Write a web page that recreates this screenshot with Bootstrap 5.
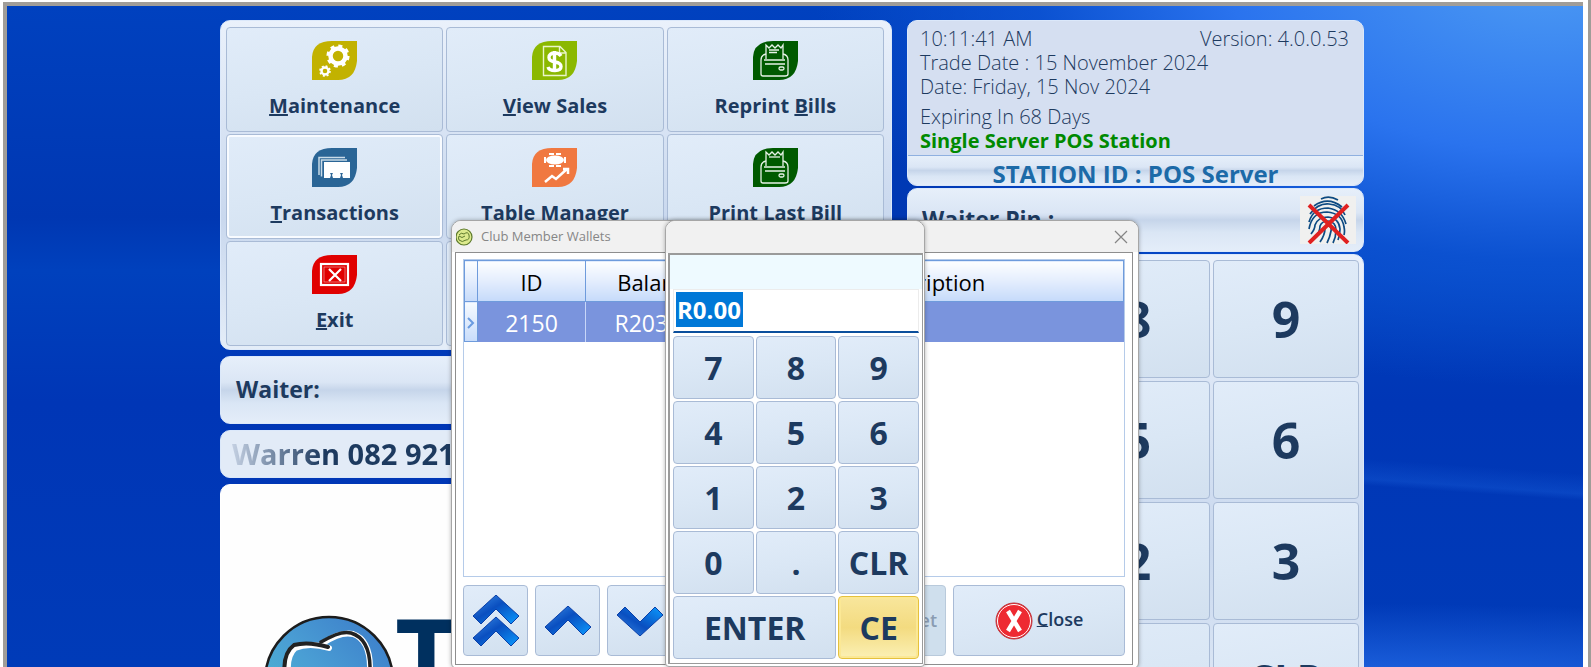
<!DOCTYPE html>
<html lang="en">
<head>
<meta charset="utf-8">
<meta name="viewport" content="width=device-width, initial-scale=1">
<title>POS Server</title>
<link href="https://cdn.jsdelivr.net/npm/bootstrap@5.3.0/dist/css/bootstrap.min.css" rel="stylesheet">
<style>
:root{--ink:#1d3a5f;--edge:#a9bbd6}
body{font-family:"Open Sans","Noto Sans",sans-serif;color:var(--ink);background:#fff;line-height:1.2}
.screen{height:100vh;padding-top:2px;border-right:3px solid #a09d98;background:#fff}
.desk{height:100%;margin-left:3px;margin-right:5px;padding-right:6px;border-top:4px solid #a09d98;border-left:4px solid #a09d98;
 background:
 linear-gradient(184deg,transparent 69%,rgba(40,120,240,.22) 72%,transparent 73%) right 0 top 0/240px 100% no-repeat,
 radial-gradient(ellipse 740px 420px at 98% -6%,#4e9cf4 0,#2a73ee 44%,rgba(14,86,214,.8) 70%,rgba(0,60,190,0) 100%),
 radial-gradient(ellipse 900px 90px at 84% 104%,rgba(40,112,236,.9),rgba(0,60,190,0)),
 linear-gradient(#0041bf 0,#0037b2 32%,#0041bd 40%,#0036b6 60%,#003bb8 100%)}
.station{width:1144px;max-width:100%;padding-top:14px}
.side-menu{width:672px;gap:6px}
.side-pin{width:457px;gap:2px}
.pane{border-radius:10px;background:linear-gradient(#eaf1fb,#c9d8ee 60%,#e4edf8);border:1px solid #dbe8fa}
.gloss{background:linear-gradient(#e6effa,#dbe6f5 38%,#c6d5ea 50%,#dae6f5 70%,#e4edf9)}
.key{--bs-btn-border-radius:4px;--bs-btn-padding-x:0;--bs-btn-padding-y:0;--bs-btn-color:var(--ink);--bs-btn-border-color:var(--edge);--bs-btn-disabled-color:#8a9cb2;--bs-btn-disabled-border-color:#b9cadb;--bs-btn-disabled-opacity:1;
 background:linear-gradient(170deg,#e1ecf9,#dae7f5 50%,#d2e0ef);font-weight:700;line-height:1.2;min-width:0}
.key:disabled{background:#cfdfed}
.menu-grid{display:grid;grid-template-columns:repeat(3,1fr);grid-auto-rows:105px;column-gap:3px;row-gap:2px;padding:6px 7px 3px 5px}
.menu-grid .key{font-size:20px}
.menu-grid svg{display:block;margin:0 auto 14px}
.lit{box-shadow:inset 0 0 0 2px #f8fbff}
.pad-grid{display:grid;grid-template-columns:repeat(3,1fr);grid-auto-rows:118px;gap:3px;padding:5px 4px 5px 7px}
.pad-grid .key{font-size:50px}
.pad-grid .zero{grid-column:span 2}
.pad-grid .word-key{font-size:40px;padding-bottom:8px}
.info{background:#d5dff1;font-size:20px;font-weight:300}
.info-text{padding:6px 14px 2px 12px}
.info p{line-height:24px;margin:0}
.expiry{padding-top:6px}
.server{color:#008a00}
.strip{height:30px;font-size:24px;font-weight:700;line-height:36px;color:#1c6aa8;border-top:1px solid #8fb0e0;border-radius:0 0 10px 10px}
.pin-row{height:64px;font-size:23px;font-weight:700;padding:0 7px 0 14px}
.waiter-row{height:68px;font-size:23px;font-weight:700;padding-left:15px}
.ticker{height:48px;font-size:29px;font-weight:700;background:#e2ebf7;padding-left:11px}
.ticker span{background:linear-gradient(90deg,#c4d0e2 0,var(--ink) 90px);-webkit-background-clip:text;background-clip:text;color:transparent}
.logo-pane{height:220px;background:#fefefe;border-color:#fff}
.logo-word{font-size:108px;line-height:1;font-weight:700;color:#00305f;padding-top:116px}
.float-win{position:absolute;left:0;right:0;top:214px;margin:0 auto;background:#fff;border:1px solid #a6a6a6;border-radius:10px 10px 6px 6px;box-shadow:0 0 4px rgba(0,0,0,.3);overflow:hidden}
.win-title{height:31px;background:#f1f1f1;font-size:13px;color:#868686}
.wallets{width:688px}
.wallets .client{margin:0 5px 3px 3px;border:1px solid #8e8e8e;padding:6px 7px 8px 7px}
.grid-box{height:318px;border:1px solid #b5cbe9;background:#fff}
.grid-box table{table-layout:fixed;width:100%;font-size:23px;text-align:center}
.grid-box th,.grid-box td{font-weight:400;height:40px;padding:2px 0 0;line-height:28px}
.grid-box thead th{color:#000;font-size:22px;background:linear-gradient(#fdfeff,#e3edfd 50%,#c5dafa);height:41px}
.grid-box th{border:1px solid #6e9bdc}
.grid-box td{color:#fff;background:#7a94dd;border-right:1px solid #c8d6f8}
.grid-box td:last-child{border-right:0}
.grid-box tbody th{background:linear-gradient(#f6faff,#c8dcfa)}
.col-mark{width:13px}.col-id{width:108px}.col-bal{width:144px}
.tool-row{gap:7px;margin-top:8px}
.tool-row .key{height:71px;width:65px;flex:none}
.tool-row .btn-wide{width:172px;font-size:18px;font-weight:600}
.numpad{width:260px;border-radius:10px 10px 4px 4px}
.numpad .win-title{height:32px}
.numpad .client{margin:0 1px 2px 2px;border:2px solid #9a9a9a;border-width:2px 1px 1px 2px;padding:0 3px 4px 3px;background:linear-gradient(#eefaff 0 34px,#fff 34px)}
.amount{height:44px;border:1px solid #ececec;border-bottom:2px solid #0b4f9c;padding:2px;background:#fff}
.amount-area{padding-top:34px}
.amount input{font-size:24px;font-weight:700;color:#fff;background:#0078d7;border:0;padding:0 0 0 1px;width:67px;height:35px;outline:0;display:block}
.num-grid{display:grid;grid-template-columns:repeat(3,1fr);grid-auto-rows:63px;gap:2px;margin-top:3px}
.num-grid .key{font-size:32px;padding-top:2px}
.num-grid .enter{grid-column:span 2}
.num-grid .hot{background:linear-gradient(#f8e69c,#f3db80 50%,#fbf0b4);border-color:#e5c13c;box-shadow:inset 0 0 0 2px #fbe895}
</style>
</head>
<body>
<svg width="0" height="0" class="position-absolute" aria-hidden="true">
 <defs>
  <path id="leaf" d="M0 39V16Q1 0 20 0H45V20Q43 39 26 39Z"/>
  <linearGradient id="blu" x1="0" y1="0" x2="1" y2="1"><stop offset="0" stop-color="#3c8fe8"/><stop offset=".45" stop-color="#0a4fc0"/><stop offset="1" stop-color="#0a9bff"/></linearGradient>
  <linearGradient id="ball" x1="0" y1="1" x2="1" y2="0"><stop offset="0" stop-color="#4cc0cf"/><stop offset=".5" stop-color="#4a9ed4"/><stop offset="1" stop-color="#3a78c8"/></linearGradient>
  <g id="printer" fill="none" stroke="#e6f2e6" stroke-width="1.300"><path d="M13 18V4l3 3 3-3 3 3 3-3 3 3 2-3v14"/><path d="M13 13q-5 1-5 6v14q0 2 2 2h22q3 0 3-2V19q0-5-5-6M11 19h21M12 23h20"/><rect x="26" y="26" width="5" height="3" rx="1.500"/></g>
  <path id="up" d="M0 21 23 0 46 21 38 29 23 14 8 29Z" fill="url(#blu)" stroke="#0a3fa8" stroke-width="1"/>
 </defs>
</svg>
<div class="screen">
<main class="desk position-relative overflow-hidden">
 <div class="station d-flex justify-content-between align-items-start mx-auto">
  <section class="side-menu d-flex flex-column">
   <div class="pane menu-grid">
    <button class="btn key" type="button"><svg width="45" height="39" aria-hidden="true"><use href="#leaf" fill="#c2b200"/><g fill="none" stroke="#fff"><circle cx="26" cy="15" r="7.500" stroke-width="4.500"/><circle cx="26" cy="15" r="10.300" stroke-width="2.600" stroke-dasharray="4.050 4.040"/><circle cx="13" cy="30" r="3.500" stroke-width="2.400"/><circle cx="13" cy="30" r="5" stroke-width="1.600" stroke-dasharray="2 1.930"/></g></svg><u>M</u>aintenance</button>
    <button class="btn key" type="button"><svg width="45" height="39" aria-hidden="true"><use href="#leaf" fill="#8bb800"/><path d="M11.500 5.500H28l6 6v23H11.500ZM27.500 5.500v6.500H34" fill="none" stroke="#eaf5c8" stroke-width="1.400"/><path d="M29 15q-2-3-6-3-6 0-6 4.500 0 3.500 6 4.500t6 4.500q0 4-6 4t-7-3.500M22.500 10v21" fill="none" stroke="#fff" stroke-width="3.400"/></svg><u>V</u>iew Sales</button>
    <button class="btn key" type="button"><svg width="45" height="39" aria-hidden="true"><use href="#leaf" fill="#005a00"/><use href="#printer"/><path d="M16 9h10M16 11.500h8" stroke="#e6f2e6" stroke-width="1.300"/></svg>Reprint <u>B</u>ills</button>
    <button class="btn key lit" type="button"><svg width="45" height="39" aria-hidden="true"><use href="#leaf" fill="#2a6596"/><path d="M7 27V9.500h26" fill="none" stroke="#c9dbe8" stroke-width="1.500"/><path d="M9.500 28.500V12H35" fill="none" stroke="#c9dbe8" stroke-width="1.500"/><path d="M12 14h26v16h-7l-1-3 1-2h-3l1 2-1 3h-7l-1-3 1-2h-3l1 2-1 3H12Z" fill="#fff"/></svg><u>T</u>ransactions</button>
    <button class="btn key" type="button"><svg width="45" height="39" aria-hidden="true"><use href="#leaf" fill="#f07840"/><g fill="#fff"><ellipse cx="23" cy="12" rx="9" ry="4.500"/><path d="M12 9h2v6h-2ZM32 9h2v6h-2ZM17 5h5v2h-5ZM24 5h5v2h-5ZM17 17h5v2h-5ZM24 17h5v2h-5Z"/></g><path d="m13 34 7-6 4 3 11-10M31 21h5v5" fill="none" stroke="#fff" stroke-width="2.500"/></svg>Table Manager</button>
    <button class="btn key" type="button"><svg width="45" height="39" aria-hidden="true"><use href="#leaf" fill="#005a00"/><use href="#printer"/><path d="M16 9h11" stroke="#e6f2e6" stroke-width="1.300"/></svg>Print Last Bill</button>
    <button class="btn key" type="button"><svg width="45" height="39" aria-hidden="true"><use href="#leaf" fill="#e00000"/><rect x="9" y="9" width="27" height="21" fill="none" stroke="#fff" stroke-width="2.200"/><path d="m17 14 12 12M29 14 17 26" stroke="#fff" stroke-width="2.200"/><rect x="12" y="12" width="21" height="15" fill="none" stroke="#f6b0b0" stroke-width=".6"/></svg><u>E</u>xit</button>
    <button class="btn key" type="button"></button>
    <button class="btn key" type="button"></button>
   </div>
   <div class="pane gloss waiter-row d-flex align-items-center">Waiter:</div>
   <div class="pane ticker d-flex align-items-center"><span>Warren 082 921</span></div>
   <div class="pane logo-pane d-flex overflow-hidden">
    <svg width="174" height="200" aria-hidden="true"><circle cx="108" cy="196" r="64" fill="url(#ball)" stroke="#1c1c1c" stroke-width="2.500"/><g fill="none" stroke-linecap="round"><path d="M102 158q18-12 30-9 18 6 17 38" stroke="#fff" stroke-width="6"/><path d="M108 163q-20-6-34 0-10 9-6 32" stroke="#fff" stroke-width="6"/><path d="M100 157q20-12 30-9 20 6 19 39" stroke="#222" stroke-width="3.500"/><path d="M107 162q-20-6-34-2-12 9-9 32" stroke="#222" stroke-width="4"/></g></svg>
    <span class="logo-word">T</span>
   </div>
  </section>
  <section class="side-pin d-flex flex-column">
   <div class="pane info">
    <div class="info-text">
     <div class="d-flex justify-content-between"><p>10:11:41 AM</p><p>Version: 4.0.0.53</p></div>
     <p>Trade Date : 15 November 2024</p>
     <p>Date: Friday, 15 Nov 2024</p>
     <p class="expiry">Expiring In 68 Days</p>
     <p class="fw-bold server">Single Server POS Station</p>
    </div>
    <div class="strip gloss text-center">STATION ID : POS Server</div>
   </div>
   <div class="pane gloss pin-row d-flex align-items-center justify-content-between"><span>Waiter Pin :</span>
    <svg width="56" height="48" role="img" aria-label="Fingerprint reader off"><rect width="56" height="48" fill="#f0f0ef"/><g fill="none" stroke="#0d4a82" stroke-width="1.700"><path d="M21 3q8-4 17 1M14 10Q28 0 42 11M10 18Q18 7 29 8q12 1 16 11M9 26Q13 12 28 12q14 2 18 16M9 33q3-17 18-17 15 1 17 15 1 4 0 8M11 38q4-5 4-9 3-8 13-8 11 1 12 12 0 6-2 11M15 42q5-6 5-12 2-5 8-5 8 1 8 9 0 7-3 13M20 46q5-7 5-14 1-3 3-3 4 1 3 6-1 6-4 12"/></g><path d="m9 9 39 38M48 9 9 47" stroke="#e02020" stroke-width="4"/></svg>
   </div>
   <div class="pane pad-grid">
    <button class="btn key" type="button">7</button><button class="btn key" type="button">8</button><button class="btn key" type="button">9</button>
    <button class="btn key" type="button">4</button><button class="btn key" type="button">5</button><button class="btn key" type="button">6</button>
    <button class="btn key" type="button">1</button><button class="btn key" type="button">2</button><button class="btn key" type="button">3</button>
    <button class="btn key zero" type="button">0</button><button class="btn key word-key" type="button">CLR</button>
   </div>
  </section>
 </div>

 <section class="float-win wallets" aria-label="Club Member Wallets">
  <div class="win-title d-flex align-items-center">
   <svg class="ms-1 me-2" width="17" height="20" viewBox="2 0 17 20" aria-hidden="true"><circle cx="10" cy="10" r="8" fill="#dcea8c" stroke="#5d7a2c" stroke-width="1.200"/><path d="M5 8q2-3 5-1 4-3 5 1 1 5-3 5-4 3-7 0-1-2 0-4 3 3 6 0" fill="none" stroke="#5d7a2c" stroke-width="1"/></svg>
   <span>Club Member Wallets</span>
   <button class="btn p-0 border-0 ms-auto me-2 d-flex" type="button" aria-label="Close window"><svg width="18" height="14"><path d="m3 1 12 12M15 1 3 13" stroke="#858585" stroke-width="1.200"/></svg></button>
  </div>
  <div class="client">
   <div class="grid-box">
    <table>
     <colgroup><col class="col-mark"><col class="col-id"><col class="col-bal"><col></colgroup>
     <thead><tr><th></th><th>ID</th><th>Balance</th><th>Description</th></tr></thead>
     <tbody><tr><th><svg class="d-block mx-auto" width="8" height="12" aria-hidden="true"><path d="m1 1 5 5-5 5" fill="none" stroke="#6a9be0" stroke-width="2"/></svg></th><td>2150</td><td>R203.00</td><td></td></tr></tbody>
    </table>
   </div>
   <div class="tool-row d-flex">
    <button class="btn key" type="button" aria-label="First"><svg width="46" height="52"><use href="#up"/><use href="#up" y="22"/></svg></button>
    <button class="btn key" type="button" aria-label="Up"><svg width="46" height="30"><use href="#up"/></svg></button>
    <button class="btn key" type="button" aria-label="Down"><svg width="46" height="30"><use href="#up" transform="matrix(1 0 0 -1 0 30)"/></svg></button>
    <button class="btn key" type="button" aria-label="Last"></button>
    <button class="btn key btn-wide flex-fill text-end pe-2" type="button" disabled>Wallet</button>
    <button class="btn key btn-wide" type="button"><svg class="me-1" width="38" height="38" aria-hidden="true"><circle cx="19" cy="19" r="18" fill="#ee2a32" stroke="#b8363c" stroke-width="1"/><circle cx="19" cy="19" r="16.500" fill="none" stroke="#fff" stroke-width="1"/><path d="m13 9 12 20M25 9 13 29" stroke="#fff" stroke-width="4.500"/></svg><u>C</u>lose</button>
   </div>
  </div>
 </section>

 <section class="float-win numpad" aria-label="Amount">
  <div class="win-title"></div>
  <div class="client">
   <div class="amount-area"><div class="amount"><input type="text" value="R0.00" aria-label="Amount"></div></div>
   <div class="num-grid">
    <button class="btn key" type="button">7</button><button class="btn key" type="button">8</button><button class="btn key" type="button">9</button>
    <button class="btn key" type="button">4</button><button class="btn key" type="button">5</button><button class="btn key" type="button">6</button>
    <button class="btn key" type="button">1</button><button class="btn key" type="button">2</button><button class="btn key" type="button">3</button>
    <button class="btn key" type="button">0</button><button class="btn key" type="button">.</button><button class="btn key" type="button">CLR</button>
    <button class="btn key enter" type="button">ENTER</button><button class="btn key hot" type="button">CE</button>
   </div>
  </div>
 </section>
</main>
</div>
<script src="https://cdn.jsdelivr.net/npm/bootstrap@5.3.0/dist/js/bootstrap.bundle.min.js"></script>
</body>
</html>
